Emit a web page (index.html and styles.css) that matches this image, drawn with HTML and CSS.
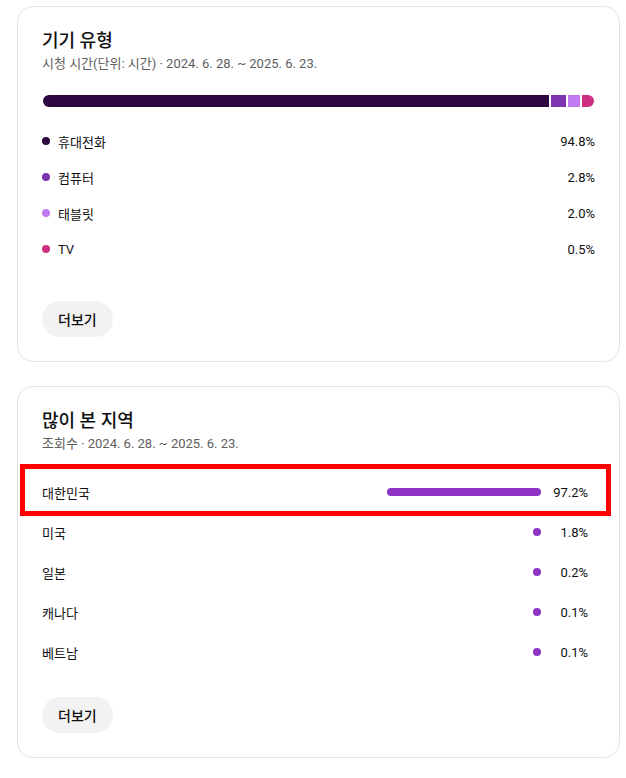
FILE: index.html
```html
<!DOCTYPE html>
<html lang="ko">
<head>
<meta charset="utf-8">
<link rel="stylesheet" href="styles.css">
</head>
<body>
<main class="page">
  <section class="card">
    <h2 class="card-title">기기 유형</h2>
    <p class="card-sub">시청 시간(단위: 시간) · 2024. 6. 28. ~ 2025. 6. 23.</p>
    <div class="stack-bar">
      <span class="seg seg-phone"></span>
      <span class="seg seg-pc" style="width:15px"></span>
      <span class="seg seg-tablet" style="width:12px"></span>
      <span class="seg seg-tv" style="width:12px"></span>
    </div>
    <ul class="legend">
      <li class="legend-row"><span class="dot dot-phone"></span><span class="legend-label">휴대전화</span><span class="legend-val">94.8%</span></li>
      <li class="legend-row"><span class="dot dot-pc"></span><span class="legend-label">컴퓨터</span><span class="legend-val">2.8%</span></li>
      <li class="legend-row"><span class="dot dot-tablet"></span><span class="legend-label">태블릿</span><span class="legend-val">2.0%</span></li>
      <li class="legend-row"><span class="dot dot-tv"></span><span class="legend-label">TV</span><span class="legend-val">0.5%</span></li>
    </ul>
    <button class="more-btn">더보기</button>
  </section>

  <section class="card card-geo">
    <h2 class="card-title">많이 본 지역</h2>
    <p class="card-sub">조회수 · 2024. 6. 28. ~ 2025. 6. 23.</p>
    <ul class="geo-list">
      <li class="geo-row highlighted"><span class="geo-label">대한민국</span><span class="geo-bar-wrap"><span class="geo-bar" style="width:154px"></span></span><span class="geo-val">97.2%</span></li>
      <li class="geo-row"><span class="geo-label">미국</span><span class="geo-bar-wrap"><span class="geo-bar" style="width:8px"></span></span><span class="geo-val">1.8%</span></li>
      <li class="geo-row"><span class="geo-label">일본</span><span class="geo-bar-wrap"><span class="geo-bar" style="width:8px"></span></span><span class="geo-val">0.2%</span></li>
      <li class="geo-row"><span class="geo-label">캐나다</span><span class="geo-bar-wrap"><span class="geo-bar" style="width:8px"></span></span><span class="geo-val">0.1%</span></li>
      <li class="geo-row"><span class="geo-label">베트남</span><span class="geo-bar-wrap"><span class="geo-bar" style="width:8px"></span></span><span class="geo-val">0.1%</span></li>
    </ul>
    <button class="more-btn">더보기</button>
  </section>
</main>
</body>
</html>
```

FILE: styles.css
```css
* { box-sizing: border-box; }
html, body { margin: 0; padding: 0; background: #fff; }
body {
  font-family: "Roboto", "Noto Sans CJK KR", sans-serif;
  color: #0f0f0f;
}
.page {
  display: flex;
  flex-direction: column;
  gap: 24px;
  padding: 6px 6px 0 17px;
}
.card {
  width: 603px;
  border: 1px solid #e3e3e3;
  border-radius: 16px;
  padding: 22px 24px 24px 24px;
  display: flex;
  flex-direction: column;
  align-items: flex-start;
}
.card-geo { padding-right: 31px; }
.card-title {
  margin: 0 0 1px;
  font-size: 18px;
  line-height: 24px;
  font-weight: 500;
}
.card-sub {
  margin: 0;
  font-size: 13px;
  line-height: 20px;
  color: #606060;
}
.stack-bar {
  margin-top: 21px;
  width: 100%;
  height: 12px;
  display: flex;
  gap: 2px;
  padding: 0 1px 0 1px;
}
.seg { display: block; height: 12px; flex: none; }
.seg-phone { flex: 1; background: #2d0840; border-radius: 6px 0 0 6px; }
.seg-pc { background: #7e34b1; }
.seg-tablet { background: #c27af2; }
.seg-tv { background: #cc2f80; border-radius: 0 6px 6px 0; }
.legend {
  list-style: none;
  margin: 16px 0 0;
  padding: 0;
  width: 100%;
}
.legend-row {
  height: 36px;
  display: flex;
  align-items: center;
  font-size: 13px;
}
.dot {
  width: 8px;
  height: 8px;
  border-radius: 50%;
  margin-right: 8px;
  flex: none;
}
.dot-phone { background: #2d0840; }
.dot-pc { background: #7e34b1; }
.dot-tablet { background: #c27af2; }
.dot-tv { background: #cc2f80; }
.legend-label { flex: 1; }
.legend-val { text-align: right; }
.more-btn {
  margin-top: 34px;
  height: 36px;
  padding: 0 16px;
  border: none;
  border-radius: 18px;
  background: #f2f2f2;
  font-family: "Roboto", "Noto Sans CJK KR", sans-serif;
  font-size: 14px;
  font-weight: 500;
  color: #0f0f0f;
}
.card-geo .more-btn { margin-top: 25px; }
.geo-list {
  list-style: none;
  margin: 18px 0 0;
  padding: 0;
  width: 100%;
}
.geo-row {
  position: relative;
  height: 40px;
  display: flex;
  align-items: center;
  font-size: 13px;
}
.geo-label { flex: 1; }
.geo-bar-wrap {
  display: flex;
  justify-content: flex-end;
  width: 160px;
}
.geo-bar {
  display: block;
  height: 8px;
  border-radius: 4px;
  background: #8e33c4;
}
.geo-val {
  width: 47px;
  text-align: right;
}
.highlighted::after {
  content: "";
  position: absolute;
  left: -22px;
  right: -23px;
  top: -8px;
  bottom: -4px;
  border: 5px solid #ff0000;
  pointer-events: none;
}
```
